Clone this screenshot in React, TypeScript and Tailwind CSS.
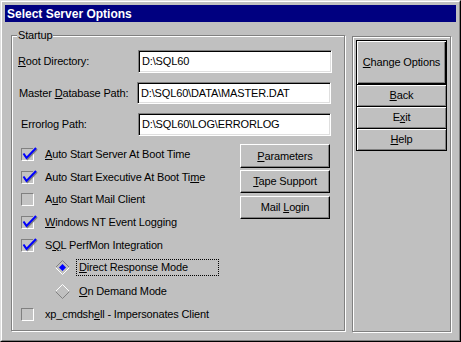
import React from "react";

const font = { fontFamily: '"Liberation Sans", Arial, sans-serif' };

function Check() {
  return (
    <svg width="16" height="14" viewBox="0 0 16 14" className="absolute left-0 top-[-2px]">
      <path d="M2.5 8 L5.5 12 L15 2" fill="none" stroke="#808080" strokeWidth="2" />
      <path d="M1.5 6.5 L4.5 11 L14 1" fill="none" stroke="#0000ff" strokeWidth="2" />
    </svg>
  );
}

function CheckRow({ checked, children, h = "h-[23px]" }: { checked: boolean; children: React.ReactNode; h?: string }) {
  return (
    <div className={`flex items-center ${h}`}>
      <div className="relative ml-[9px] h-[13px] w-[13px] border border-t-[#808080] border-l-[#808080] border-b-white border-r-white bg-[#c4c4c4]">
        {checked && <Check />}
      </div>
      <span className="ml-[11px]">{children}</span>
    </div>
  );
}

function Diamond({ selected }: { selected: boolean }) {
  return (
    <svg width="15" height="15" viewBox="0 0 15 15">
      <path d="M0.5 7.5 L7.5 0.5 L14.5 7.5" fill="none" stroke={selected ? "#808080" : "#ffffff"} strokeWidth="1" />
      <path d="M0.5 7.5 L7.5 14.5 L14.5 7.5" fill="none" stroke={selected ? "#ffffff" : "#808080"} strokeWidth="1" />
      {selected && <path d="M7.5 4 L11 7.5 L7.5 11 L4 7.5 Z" fill="#0000ff" />}
    </svg>
  );
}

function Btn({ children, cls }: { children: React.ReactNode; cls: string }) {
  return (
    <div
      className={`flex items-center justify-center border border-t-white border-l-white border-b-black border-r-black shadow-[inset_-1px_-1px_0_#808080] ${cls}`}
    >
      <span>{children}</span>
    </div>
  );
}

function Field({ label, value, ml, lw, w, h }: { label: React.ReactNode; value: string; ml: string; lw: string; w: string; h: string }) {
  return (
    <div className="flex items-center">
      <div className={`${ml} ${lw}`}>{label}</div>
      <div
        className={`${w} ${h} flex items-center bg-white border border-t-[#808080] border-l-[#808080] border-b-white border-r-white shadow-[inset_1px_1px_0_#000,inset_-1px_-1px_0_#dfdfdf] pl-[3px]`}
      >
        <span>{value}</span>
      </div>
    </div>
  );
}

export default function App() {
  return (
    <div
      className="w-[461px] h-[342px] bg-[#c0c0c0] text-black text-[11px] tracking-[-0.15px] leading-none border border-t-[#dfdfdf] border-l-[#dfdfdf] border-b-black border-r-black"
      style={font}
    >
      <div className="h-full w-full border border-t-white border-l-white border-b-[#808080] border-r-[#808080] p-[3px] flex flex-col">
        <div className="h-[17px] bg-[#000080] text-white font-bold text-[12px] tracking-normal flex items-center pl-[2px] shrink-0">
          Select Server Options
        </div>
        <div className="flex pl-[6px] mt-[13px]">
          {/* Startup group */}
          <div className="relative w-[334px] h-[296px] border border-[#808080] shadow-[inset_1px_1px_0_#fff,1px_1px_0_#fff]">
            <div className="absolute left-[5px] top-[-6px] bg-[#c0c0c0] px-[1px]">Startup</div>
            <div className="flex flex-col mt-[14px]">
              <Field
                label={<><u>R</u>oot Directory:</>}
                value="D:\SQL60"
                ml="ml-[6px]"
                lw="w-[120px]"
                w="w-[194px]"
                h="h-[23px]"
              />
              <div className="mt-[9px]">
                <Field
                  label={<>Master <u>D</u>atabase Path:</>}
                  value="D:\SQL60\DATA\MASTER.DAT"
                  ml="ml-[7px]"
                  lw="w-[118px]"
                  w="w-[194px]"
                  h="h-[22px]"
                />
              </div>
              <div className="mt-[9px]">
                <Field
                  label={<>Errorlog Path:</>}
                  value="D:\SQL60\LOG\ERRORLOG"
                  ml="ml-[9px]"
                  lw="w-[117px]"
                  w="w-[193px]"
                  h="h-[23px]"
                />
              </div>
            </div>
            <div className="flex mt-[7px]">
              <div className="w-[228px] flex flex-col">
                <CheckRow checked h="h-[22.75px]"><u>A</u>uto Start Server At Boot Time</CheckRow>
                <CheckRow checked h="h-[22.75px]">Auto Start Executive At Boot Ti<u>m</u>e</CheckRow>
                <CheckRow checked={false} h="h-[22.75px]">A<u>u</u>to Start Mail Client</CheckRow>
                <CheckRow checked h="h-[22.75px]"><u>W</u>indows NT Event Logging</CheckRow>
                <CheckRow checked h="h-[22.75px]">S<u>Q</u>L PerfMon Integration</CheckRow>
                <div className="flex items-center h-[22px] pl-[43px]">
                  <Diamond selected />
                  <span className="ml-[6px] w-[143px] px-[2px] py-[2px] border border-dotted border-black"><u>D</u>irect Response Mode</span>
                </div>
                <div className="flex items-center h-[26px] pl-[43px]">
                  <Diamond selected={false} />
                  <span className="ml-[9px]"><u>O</u>n Demand Mode</span>
                </div>
                <CheckRow checked={false} h="h-[20px]">xp_cmdsh<u>e</u>ll - Impersonates Client</CheckRow>
              </div>
              <div className="flex flex-col mt-[1px]">
                <Btn cls="w-[90px] h-[24px]"><u>P</u>arameters</Btn>
                <Btn cls="w-[90px] h-[23px] mt-[2px]"><u>T</u>ape Support</Btn>
                <Btn cls="w-[90px] h-[23px] mt-[3px]">Mail <u>L</u>ogin</Btn>
              </div>
            </div>
          </div>
          {/* Right panel */}
          <div className="ml-[7px] w-[99px] h-[296px] mt-[1px] border border-[#808080] shadow-[inset_1px_1px_0_#fff,1px_1px_0_#fff] pl-[3px] pt-[3px]">
            <div className="w-[91px] flex flex-col">
              <div className="h-[45px] border border-black flex items-center justify-center shadow-[inset_1px_1px_0_#fff,inset_-1px_-1px_0_#000,inset_-2px_-2px_0_#808080]">
                <span><u>C</u>hange Options</span>
              </div>
              <div className="h-[23px] -mt-px border border-black flex items-center justify-center shadow-[inset_1px_1px_0_#fff,inset_-1px_-1px_0_#808080]">
                <span><u>B</u>ack</span>
              </div>
              <div className="h-[23px] -mt-px border border-black flex items-center justify-center shadow-[inset_1px_1px_0_#fff,inset_-1px_-1px_0_#808080]">
                <span>E<u>x</u>it</span>
              </div>
              <div className="h-[23px] -mt-px border border-black flex items-center justify-center shadow-[inset_1px_1px_0_#fff,inset_-1px_-1px_0_#808080]">
                <span><u>H</u>elp</span>
              </div>
            </div>
          </div>
        </div>
      </div>
    </div>
  );
}
